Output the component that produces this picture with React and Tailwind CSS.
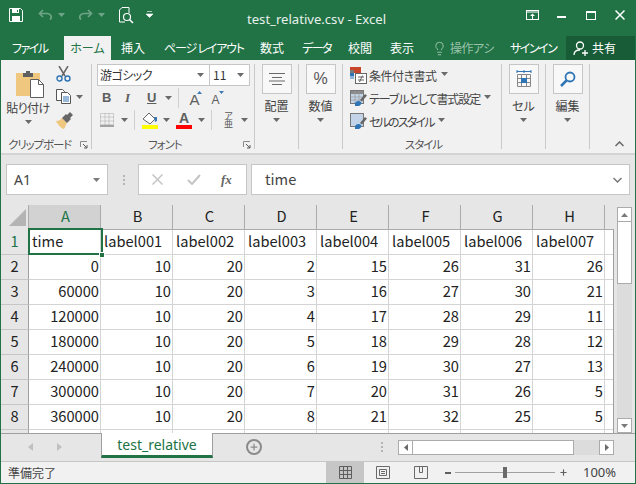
import { Lightbulb, Plus } from 'lucide-react';

const JP = "font-['Noto_Sans_CJK_JP','Noto_Sans',sans-serif] [font-feature-settings:'palt']";

const COLUMNS = ['A', 'B', 'C', 'D', 'E', 'F', 'G', 'H'];
const ROWS = [
  [0, 10, 20, 2, 15, 26, 31, 26],
  [60000, 10, 20, 3, 16, 27, 30, 21],
  [120000, 10, 20, 4, 17, 28, 29, 11],
  [180000, 10, 20, 5, 18, 29, 28, 12],
  [240000, 10, 20, 6, 19, 30, 27, 13],
  [300000, 10, 20, 7, 20, 31, 26, 5],
  [360000, 10, 20, 8, 21, 32, 25, 5],
];
const HEADINGS = ['time', 'label001', 'label002', 'label003', 'label004', 'label005', 'label006', 'label007'];

function Caret({ className = '', color = '#6a6a6a' }) {
  return (
    <svg width="7" height="4" viewBox="0 0 7 4" className={`shrink-0 ${className}`}>
      <path d="M0 0h7L3.5 4z" fill={color} />
    </svg>
  );
}

function Launcher() {
  return (
    <svg width="8" height="8" viewBox="0 0 8 8" className="shrink-0">
      <path d="M.5 6V.5H7" fill="none" stroke="#8a8a8a" />
      <path d="M3 3l4 4M7 4v3H4" fill="none" stroke="#5a5a5a" />
    </svg>
  );
}

// big square icon button used by 配置 / 数値 / セル / 編集
function BigGroup({ label, children }) {
  return (
    <div className="w-[44px] h-[85px] flex flex-col items-center shrink-0 border-r border-[#c9c9c9]">
      <div className="w-[30px] h-[30px] border border-[#c6c6c6] bg-[#f8f8f8] flex items-center justify-center">
        {children}
      </div>
      <div className="mt-[4px] text-[12px] leading-[16px] text-[#444]">{label}</div>
      <Caret className="mt-[4px]" />
    </div>
  );
}

function StyleRow({ icon, label, tracking }) {
  return (
    <div className="flex items-center h-[23px]">
      {icon}
      <span className={`ml-[2px] text-[12px] leading-[16px] text-[#444] whitespace-nowrap ${tracking}`}>{label}</span>
      <Caret className="ml-[4px] -mt-[3px]" />
    </div>
  );
}

function TableIcon() {
  return (
    <svg width="17" height="17" viewBox="0 0 17 17" className="shrink-0">
      <rect x=".5" y=".5" width="13" height="13" fill="#fff" stroke="#777" />
      <path d="M1 1h12v3H1z" fill="#8a8a8a" />
      <path d="M1 4h12v9H1z" fill="#c3d4e8" />
      <path d="M5 1v12M9 1v12M1 7h12M1 10h12" stroke="#999" strokeWidth=".7" />
      <path d="M15 4l2 1.5-5 6-2-1.5z" fill="#666" />
      <path d="M5 14c0-3 4-4 6-2 1 2-1 4-3 4H5z" fill="#2f75b5" />
    </svg>
  );
}

function CellStyleIcon() {
  return (
    <svg width="17" height="17" viewBox="0 0 17 17" className="shrink-0">
      <rect x=".5" y=".5" width="13" height="13" fill="#c3d4e8" stroke="#777" />
      <path d="M15 4l2 1.5-5 6-2-1.5z" fill="#666" />
      <path d="M5 14c0-3 4-4 6-2 1 2-1 4-3 4H5z" fill="#2f75b5" />
    </svg>
  );
}

function CondIcon() {
  return (
    <svg width="17" height="17" viewBox="0 0 17 17" className="shrink-0">
      <path d="M0 0h11v3H0z" fill="#c8472a" />
      <path d="M0 3h4v3H0z" fill="#7a7a7a" />
      <path d="M4 3h7v3H4z" fill="#c8472a" />
      <path d="M0 6h4v3H0z" fill="#2f75b5" />
      <path d="M0 9h4v3H0z" fill="#8fb4d9" />
      <rect x="5.5" y="6.5" width="11" height="10" fill="#fff" stroke="#666" />
      <path d="M8 10h6M8 13h6M12.5 8.5l-3 6.5" stroke="#555" strokeWidth=".9" fill="none" />
    </svg>
  );
}

function TitleBar() {
  return (
    <div className="h-[36px] flex items-center relative shrink-0 text-white">
      <svg width="14" height="14" viewBox="0 0 14 14" className="ml-[9px] mt-[-6px]">
        <path d="M.5.5h11l2 2v11H.5z" fill="none" stroke="#fff" />
        <path d="M3 1h7v4H3zM3 8h8v5H3z" fill="#fff" />
        <path d="M8 2h1v2H8z" fill="#217346" />
      </svg>
      <svg width="15" height="12" viewBox="0 0 15 12" className="ml-[15px] mt-[-6px]">
        <path d="M5 1L1.5 4.5 5 8M2 4.5h7a4 3.5 0 0 1 3 6" fill="none" stroke="#6fa587" strokeWidth="1.7" />
      </svg>
      <Caret className="ml-[5px] mt-[-6px]" color="#6fa587" />
      <svg width="15" height="12" viewBox="0 0 15 12" className="ml-[13px] mt-[-6px]">
        <path d="M10 1l3.5 3.5L10 8M13 4.5H6a4 3.5 0 0 0-3 6" fill="none" stroke="#6fa587" strokeWidth="1.7" />
      </svg>
      <Caret className="ml-[5px] mt-[-6px]" color="#6fa587" />
      <svg width="15" height="17" viewBox="0 0 15 17" className="ml-[14px] mt-[-6px]">
        <path d="M10 6V.5H3L.5 3v12H6" fill="none" stroke="#fff" />
        <circle cx="8" cy="10" r="3.5" fill="none" stroke="#fff" strokeWidth="1.2" />
        <path d="M10.5 12.5l3.5 3.5" stroke="#fff" strokeWidth="1.5" />
      </svg>
      <svg width="7" height="7" viewBox="0 0 7 7" className="ml-[12px] mt-[-8px]">
        <path d="M1 .5h5M0 3h7L3.5 6.500z" fill="#fff" stroke="#fff" strokeWidth=".6" />
      </svg>

      <span className="absolute left-[247px] top-[10px] text-[13.100px] leading-[18px] text-[#e8f1ec] font-['Noto_Sans',sans-serif]">
        test_relative.csv - Excel
      </span>

      <div className="ml-auto flex items-center mt-[-6px]">
        <svg width="13" height="10" viewBox="0 0 13 10">
          <rect x=".5" y=".5" width="12" height="9" fill="none" stroke="#fff" />
          <path d="M1 2h11" stroke="#fff" />
          <path d="M6.5 3.5L9 6H4zM6 6h1v3H6z" fill="#fff" />
        </svg>
        <div className="ml-[18px] w-[9px] h-[2px] bg-white mt-[4px]" />
        <div className="ml-[20px] w-[10px] h-[9px] border border-white border-t-2" />
        <svg width="10" height="10" viewBox="0 0 10 10" className="ml-[19px] mr-[11px]">
          <path d="M.5.5l9 9M9.5.5l-9 9" stroke="#fff" strokeWidth="1.5" />
        </svg>
      </div>
    </div>
  );
}

function TabsBar() {
  const tabs = [
    ['挿入', 'ml-[10px] w-[24px]', ''],
    ['ページ レイアウト', 'ml-[19px] w-[78px]', 'tracking-[-1.2px]'],
    ['数式', 'ml-[18px] w-[24px]', ''],
    ['データ', 'ml-[18px] w-[29px]', 'tracking-[-1.5px]'],
    ['校閲', 'ml-[17px] w-[24px]', ''],
    ['表示', 'ml-[18px] w-[24px]', ''],
  ];
  return (
    <div className="h-[24px] flex items-stretch shrink-0 text-[12px] text-white">
      <div className="ml-[12px] w-[35px] flex items-center whitespace-nowrap tracking-[-1.5px]">ファイル</div>
      <div className="ml-[17px] w-[47px] bg-[#f1f1f1] text-[#217346] flex items-center justify-center">ホーム</div>
      {tabs.map(([name, box, tracking]) => (
        <div key={name} className={`${box} ${tracking} flex items-center whitespace-nowrap`}>{name}</div>
      ))}
      <Lightbulb size={15} strokeWidth={1.5} className="ml-[18px] self-center text-[#9cc3ac]" />
      <div className="ml-[3px] w-[47px] overflow-hidden flex items-center whitespace-nowrap text-[#9cc3ac] tracking-[-.5px]">操作アシ</div>
      <div className="ml-[13px] w-[46px] flex items-center whitespace-nowrap tracking-[-1.5px]">サインイン</div>
      <div className="ml-auto w-[70px] bg-[#185c37] flex items-center">
        <svg width="15" height="15" viewBox="0 0 15 15" className="ml-[7px]">
          <circle cx="7" cy="4.5" r="3.5" fill="none" stroke="#fff" strokeWidth="1.3" />
          <path d="M1 14c0-3 2-5 6-5M9 12h6M12 9v6" fill="none" stroke="#fff" strokeWidth="1.3" />
        </svg>
        <span className="ml-[4px]">共有</span>
      </div>
    </div>
  );
}

function ClipboardGroup() {
  return (
    <div className="w-[91px] h-[85px] shrink-0 border-r border-[#c9c9c9] flex flex-col">
      <div className="flex flex-1 min-h-0">
        <div className="w-[54px] flex flex-col items-center">
          <svg width="28" height="27" viewBox="0 0 28 27" className="mt-[7px] self-start ml-[15px]">
            <path d="M0 2h24v23H0z" fill="#efc77e" />
            <path d="M7 2h3V0h4v2h3v4H7z" fill="#5f5f5f" />
            <path d="M14.5 8.500h8l5 5v13h-13z" fill="#fff" stroke="#5f5f5f" />
            <path d="M22.5 8.500v5h5" fill="none" stroke="#5f5f5f" />
          </svg>
          <div className="mt-[2px] text-[12px] leading-[16px] text-[#444] whitespace-nowrap tracking-[-.5px]">貼り付け</div>
          <Caret className="mt-[4px]" />
        </div>
        <div className="flex flex-col">
          <svg width="15" height="16" viewBox="0 0 15 16" className="mt-[2px] ml-[1px]">
            <path d="M3 0l6 10M12 0L6 10" stroke="#666" strokeWidth="1.5" />
            <circle cx="3.5" cy="12.5" r="2.5" fill="none" stroke="#2f75b5" strokeWidth="1.4" />
            <circle cx="11.5" cy="12.5" r="2.5" fill="none" stroke="#2f75b5" strokeWidth="1.4" />
          </svg>
          <div className="flex items-center mt-[7px] ml-[1px]">
            <svg width="15" height="15" viewBox="0 0 15 15">
              <path d="M.5.5h6l2 2v9H.5z" fill="#fff" stroke="#555" />
              <path d="M5.5 3.500h6l3 3v8h-9z" fill="#fff" stroke="#555" />
              <path d="M7 8h6M7 10h6M7 12h6" stroke="#2f75b5" />
            </svg>
            <Caret className="ml-[5px]" />
          </div>
          <svg width="17" height="17" viewBox="0 0 17 17" className="mt-[8px] ml-[1px]">
            <path d="M0 9c3 0 5-2 6-3l5 5c-1 1-2 5-3 6-2 0-7-5-8-8z" fill="#efc77e" />
            <path d="M6 6l4-4 1 1 3-3 3 3-3 3 1 1-4 4z" fill="#666" />
          </svg>
        </div>
      </div>
      <div className="h-[14px] flex items-center text-[11.500px] text-[#555] pl-[7px] pr-[3px] mb-[-3px] tracking-[-1.1px]">
        <span className="flex-1 whitespace-nowrap">クリップボード</span>
        <Launcher />
      </div>
    </div>
  );
}

function FontGroup() {
  return (
    <div className="w-[163px] h-[85px] shrink-0 border-r border-[#c9c9c9] flex flex-col pl-[5px]">
      <div className="flex h-[22px] w-[153px] bg-white border border-[#c6c6c6]">
        <div className="w-[112px] flex items-center pl-[2px] pr-[5px] text-[12px] border-r border-[#c6c6c6] text-[#333]">
          <span className="flex-1 tracking-[-.5px]">游ゴシック</span>
          <Caret />
        </div>
        <div className="flex-1 flex items-center pl-[3px] pr-[5px] text-[12px] text-[#333]">
          <span className="flex-1">11</span>
          <Caret />
        </div>
      </div>
      <div className="flex items-center h-[23px] text-[#5e5e5e] text-[13px]">
        <span className="ml-[5px] w-[8px] font-bold font-['Liberation_Sans',sans-serif]">B</span>
        <span className="ml-[15px] w-[7px] font-['Liberation_Serif',serif] italic font-bold">I</span>
        <span className="ml-[15px] underline font-bold font-['Liberation_Sans',sans-serif]">U</span>
        <Caret className="ml-[9px]" />
        <div className="ml-[6px] w-px h-[20px] bg-[#d0d0d0]" />
        <span className="ml-[10px] text-[15px] font-['Liberation_Sans',sans-serif] leading-none mt-[4px]">A</span>
        <svg width="5" height="3" viewBox="0 0 5 3" className="-mt-[10px] -ml-[2px]"><path d="M0 3h5L2.500 0z" fill="#3d7ab5" /></svg>
        <span className="ml-[9px] text-[12px] font-['Liberation_Sans',sans-serif] leading-none mt-[5px]">A</span>
        <svg width="5" height="3" viewBox="0 0 5 3" className="-mt-[10px]"><path d="M0 0h5L2.500 3z" fill="#3d7ab5" /></svg>
      </div>
      <div className="flex items-center h-[22px]">
        <svg width="14" height="14" viewBox="0 0 14 14" className="ml-[3px]">
          <path d="M.5.5h13v11H.5zM5 .5v11M9 .5v11M.5 4h13M.5 8h13" fill="none" stroke="#999" strokeWidth=".8" strokeDasharray="1 1" />
          <path d="M0 13h14" stroke="#555" />
        </svg>
        <Caret className="ml-[7px]" />
        <div className="ml-[6px] w-px h-[20px] bg-[#d0d0d0]" />
        <div className="ml-[7px] flex flex-col w-[16px]">
          <svg width="16" height="13" viewBox="0 0 16 13">
            <path d="M1 7l6-6 6 6-5 5z" fill="#fff" stroke="#666" />
            <path d="M12 5l3 0 0 4-2 1z" fill="#3d7ab5" />
          </svg>
          <div className="h-[4px] bg-[#ffff00]" />
        </div>
        <Caret className="ml-[5px]" />
        <div className="ml-[6px] flex flex-col items-center w-[16px]">
          <span className="text-[14px] leading-[13px] font-bold text-[#5e5e5e] font-['Liberation_Sans',sans-serif]">A</span>
          <div className="h-[4px] w-full bg-[#ff0000]" />
        </div>
        <Caret className="ml-[6px]" />
        <div className="ml-[6px] w-px h-[20px] bg-[#d0d0d0]" />
        <span className="ml-[12px] w-[9px] text-[9px] leading-[8px] text-[#555] text-center">ア亜</span>
        <Caret className="ml-[8px]" />
      </div>
      <div className="mt-auto h-[14px] mb-[-3px] flex items-center text-[11.500px] text-[#555] pr-[3px]">
        <span className="ml-[51px] flex-1 tracking-[-1px]">フォント</span>
        <Launcher />
      </div>
    </div>
  );
}

function StylesGroup() {
  return (
    <div className="w-[159px] h-[85px] shrink-0 border-r border-[#c9c9c9] flex flex-col pl-[7px]">
      <StyleRow icon={<CondIcon />} label="条件付き書式" tracking="tracking-[-.5px]" />
      <StyleRow icon={<TableIcon />} label="テーブルとして書式設定" tracking="tracking-[-1.1px]" />
      <StyleRow icon={<CellStyleIcon />} label="セルのスタイル" tracking="tracking-[-1.8px]" />
      <div className="mt-auto mb-[-3px] h-[14px] flex items-center justify-center text-[11.500px] text-[#555] pr-[4px] tracking-[-1px]">スタイル</div>
    </div>
  );
}

function Ribbon() {
  return (
    <div className="h-[95px] shrink-0 bg-[#f1f1f1] border-b-2 border-[#d4d4d4] pt-[4px] flex text-[#444] overflow-hidden relative">
      <ClipboardGroup />
      <FontGroup />
      <BigGroup label="配置">
        <svg width="16" height="12" viewBox="0 0 16 12">
          <path d="M0 .5h16M3 4.500h10M0 8h16M3 11.500h10" stroke="#6a6a6a" />
        </svg>
      </BigGroup>
      <BigGroup label="数値">
        <span className="text-[16px] text-[#555] font-['Liberation_Sans',sans-serif]">%</span>
      </BigGroup>
      <StylesGroup />
      <BigGroup label="セル">
        <svg width="16" height="18" viewBox="0 0 16 18">
          <path d="M1 1.500h14M1 0v3M8 0v3M15 0v3" stroke="#2f75b5" />
          <path d="M1.500 4.500h13v12h-13zM1 8.500h14M1 12.500h14M5.500 4v13M10.500 4v13" fill="none" stroke="#888" />
          <path d="M5 8h6v5H5z" fill="#2f75b5" />
        </svg>
      </BigGroup>
      <BigGroup label="編集">
        <svg width="16" height="16" viewBox="0 0 16 16">
          <circle cx="10" cy="6" r="4.5" fill="none" stroke="#2f75b5" strokeWidth="1.8" />
          <path d="M6.5 9.500L1 15" stroke="#2f75b5" strokeWidth="2.5" />
        </svg>
      </BigGroup>
      <svg width="9" height="6" viewBox="0 0 9 6" className="absolute right-[11px] bottom-[6px]">
        <path d="M.5 5l4-4 4 4" fill="none" stroke="#666" strokeWidth="1.5" />
      </svg>
    </div>
  );
}

function FormulaBar() {
  return (
    <div className="h-[31px] mt-[9px] shrink-0 flex items-stretch pl-[5px] pr-[5px]">
      <div className="w-[102px] bg-white border border-[#c6c6c6] flex items-center pl-[7px] pr-[7px] text-[14px] text-[#444] font-['Noto_Sans',sans-serif]">
        <span className="flex-1">A1</span>
        <Caret color="#7a7a7a" />
      </div>
      <div className="ml-[15px] w-[2px] flex flex-col justify-center gap-[2px] shrink-0">
        <div className="h-[2px] bg-[#b4b4b4]" />
        <div className="h-[2px] bg-[#b4b4b4]" />
        <div className="h-[2px] bg-[#b4b4b4]" />
      </div>
      <div className="ml-[13px] w-[109px] bg-white border border-[#c6c6c6] flex items-center text-[#bdbdbd]">
        <svg width="11" height="11" viewBox="0 0 11 11" className="ml-[13px]">
          <path d="M.5.5l10 10M10.500.5l-10 10" stroke="#c4c4c4" strokeWidth="1.5" />
        </svg>
        <svg width="14" height="11" viewBox="0 0 14 11" className="ml-[24px]">
          <path d="M1 6l4 4 8-9" fill="none" stroke="#c4c4c4" strokeWidth="2" />
        </svg>
        <span className="ml-[20px] text-[#666] italic text-[13px] font-bold font-['Liberation_Serif',serif]">fx</span>
      </div>
      <div className="ml-[4px] flex-1 bg-white border border-[#c6c6c6] flex items-center pl-[13px] pr-[7px] text-[14.670px] text-[#444]">
        <span className="flex-1 -mt-[2px]">time</span>
        <svg width="9" height="6" viewBox="0 0 9 6">
          <path d="M.5 1l4 4 4-4" fill="none" stroke="#777" strokeWidth="1.5" />
        </svg>
      </div>
    </div>
  );
}

function Row({ num, cells, text, active }) {
  return (
    <div className="flex h-[25px]">
      <div className={`w-[28px] shrink-0 border-r border-[#9f9f9f] border-b border-b-[#c6c6c6] text-center ${active ? 'text-[#217346]' : ''}`}>
        {num}
      </div>
      {cells.map((value, i) => (
        <div
          key={i}
          className={`w-[72px] shrink-0 bg-white border-r border-b border-[#d4d4d4] whitespace-nowrap ${text ? 'pl-[3px]' : 'text-right pr-[1px]'}`}
        >
          {value}
        </div>
      ))}
      <div className="flex-1 bg-white border-b border-[#d4d4d4]" />
    </div>
  );
}

function Grid() {
  return (
    <div className="mt-[10px] flex h-[228px] shrink-0">
      <div className="w-[612px] shrink-0 overflow-hidden relative text-[14.670px] leading-[21px] text-[#222]">
        {/* column headers */}
        <div className="flex h-[25px]">
          <div className="w-[28px] shrink-0 border-r border-[#ababab] flex items-end justify-end pr-[2px] pb-[4px]">
            <svg width="17" height="17" viewBox="0 0 17 17"><path d="M17 0v17H0z" fill="#b4b4b4" /></svg>
          </div>
          {COLUMNS.map((col) => (
            <div
              key={col}
              className={`w-[72px] shrink-0 border-r border-[#ababab] text-center pl-[2px] ${
                col === 'A' ? 'bg-[#d2d2d2] text-[#217346] border-b-2 border-b-[#217346]' : 'border-b border-b-[#ababab]'
              }`}
            >
              {col}
            </div>
          ))}
          <div className="flex-1 border-b border-[#ababab]" />
        </div>
        {/* header row + data rows */}
        <Row num={1} cells={HEADINGS} text active />
        {ROWS.map((cells, i) => (
          <Row key={i} num={i + 2} cells={cells} />
        ))}
        <Row cells={['', '', '', '', '', '', '', '']} />
        {/* active cell */}
        <div className="absolute left-[27px] top-[23px] w-[75px] h-[27px] border-2 border-[#217346]" />
        <div className="absolute left-[98px] top-[47px] w-[6px] h-[6px] bg-[#217346] border border-white" />
      </div>
      <div className="w-px bg-[#9f9f9f] mt-[24px] shrink-0" />
      <VScroll />
    </div>
  );
}

function VScroll() {
  return (
    <div className="ml-[3px] w-[15px] mt-[2px] shrink-0 flex flex-col bg-[#dcdcdc]">
      <div className="h-[15px] bg-white border border-[#ababab] flex items-center justify-center">
        <svg width="7" height="4" viewBox="0 0 7 4"><path d="M0 4h7L3.5 0z" fill="#7a7a7a" /></svg>
      </div>
      <div className="h-[63px] bg-white border border-[#ababab] -mt-px" />
      <div className="mt-auto h-[15px] bg-white border border-[#ababab] flex items-center justify-center">
        <Caret color="#7a7a7a" />
      </div>
    </div>
  );
}

function SheetTabs() {
  return (
    <div className="h-[28px] shrink-0 flex border-t border-[#9f9f9f] relative">
      <svg width="6" height="8" viewBox="0 0 6 8" className="ml-[27px] mt-[9px]"><path d="M5 0v8L0 4z" fill="#c0c0c0" /></svg>
      <svg width="6" height="8" viewBox="0 0 6 8" className="ml-[23px] mt-[9px]"><path d="M0 0v8l5-4z" fill="#c0c0c0" /></svg>
      <div className="ml-[38px] w-[112px] h-[25px] -mt-px bg-white border-x border-[#9f9f9f] border-b-[3px] border-b-[#217346] text-center text-[14px] leading-[24px] text-[#217346] font-['Noto_Sans',sans-serif]">
        test_relative
      </div>
      <div className="ml-[33px] mt-[5px] w-[16px] h-[16px] rounded-full border-2 border-[#8a8a8a] flex items-center justify-center">
        <Plus size={10} strokeWidth={3} className="text-[#8a8a8a]" />
      </div>
      <div className="ml-[119px] mt-[8px] flex flex-col gap-[2px]">
        <div className="w-[2px] h-[2px] bg-[#b4b4b4]" />
        <div className="w-[2px] h-[2px] bg-[#b4b4b4]" />
        <div className="w-[2px] h-[2px] bg-[#b4b4b4]" />
      </div>
      <div className="ml-[15px] mt-[6px] w-[216px] h-[15px] flex bg-[#dcdcdc]">
        <div className="w-[15px] bg-white border border-[#ababab] flex items-center justify-center">
          <svg width="4" height="7" viewBox="0 0 4 7"><path d="M4 0v7L0 3.5z" fill="#6a6a6a" /></svg>
        </div>
        <div className="w-[162px] bg-white border border-[#ababab] -ml-px" />
        <div className="ml-auto w-[15px] bg-white border border-[#ababab] flex items-center justify-center">
          <svg width="4" height="7" viewBox="0 0 4 7"><path d="M0 0v7l4-3.5z" fill="#6a6a6a" /></svg>
        </div>
      </div>
    </div>
  );
}

function StatusBar() {
  return (
    <div className="h-[22px] shrink-0 bg-[#f1f1f1] border-t border-[#c6c6c6] flex items-stretch text-[12px] text-[#444]">
      <div className="ml-[7px] flex items-center">準備完了</div>
      <div className="ml-auto w-[38px] bg-[#c6c6c6] flex items-center justify-center">
        <svg width="13" height="13" viewBox="0 0 13 13">
          <path d="M.5.5h12v12H.5zM4.500.5v12M8.500.5v12M.5 4.500h12M.5 8.500h12" fill="none" stroke="#5e5e5e" />
        </svg>
      </div>
      <div className="ml-[12px] flex items-center">
        <svg width="14" height="13" viewBox="0 0 14 13">
          <path d="M.5.5h13v12H.5z" fill="none" stroke="#6a6a6a" />
          <path d="M3.5 3.500h7v6h-7zM5 5.500h4M5 7.500h4" fill="none" stroke="#6a6a6a" />
        </svg>
      </div>
      <div className="ml-[24px] flex items-center">
        <svg width="14" height="13" viewBox="0 0 14 13">
          <path d="M.5.5h13v12H.5zM5.500.5v6h3v-6" fill="none" stroke="#6a6a6a" />
        </svg>
      </div>
      <div className="ml-[17px] flex items-center">
        <div className="w-[6px] h-[2px] bg-[#5e5e5e]" />
        <div className="ml-[4px] relative w-[100px] h-px bg-[#a0a0a0]">
          <div className="absolute left-[48px] -top-[5px] w-[4px] h-[11px] bg-[#6a6a6a]" />
        </div>
        <Plus size={9} strokeWidth={3} className="ml-[4px] text-[#5e5e5e]" />
      </div>
      <div className="ml-[15px] mr-[20px] w-[32px] flex items-center whitespace-nowrap text-[13px] font-['Noto_Sans',sans-serif]">100%</div>
    </div>
  );
}

export default function App() {
  return (
    <div className={`w-[636px] h-[484px] flex flex-col overflow-hidden bg-[#e6e6e6] border-x border-b border-[#217346] ${JP}`}>
      <div className="bg-[#217346] -mx-px">
        <TitleBar />
        <TabsBar />
      </div>
      <Ribbon />
      <FormulaBar />
      <Grid />
      <SheetTabs />
      <StatusBar />
    </div>
  );
}
